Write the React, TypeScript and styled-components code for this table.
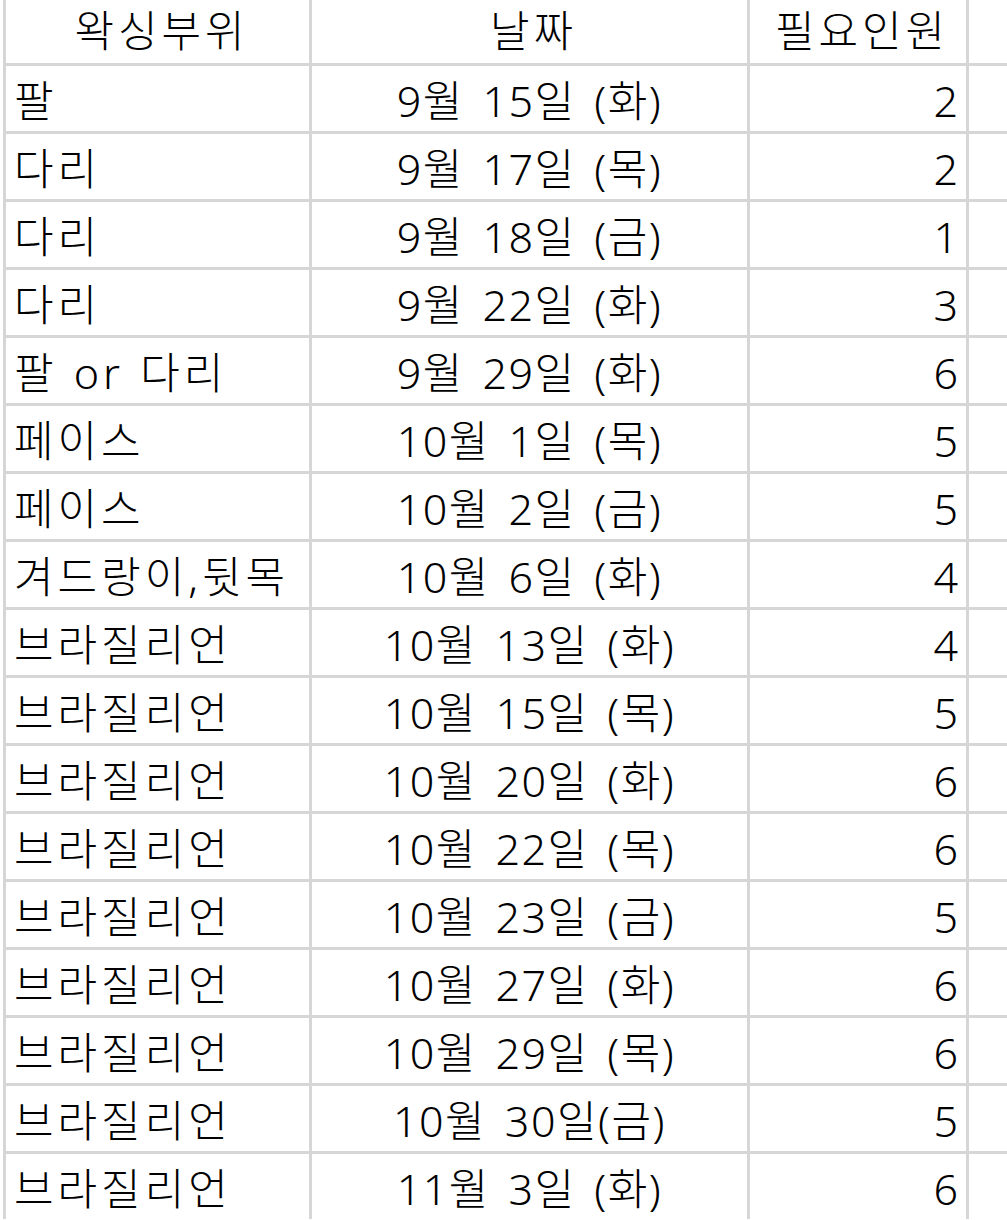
import React from 'react';
import styled, { createGlobalStyle } from 'styled-components';

const GlobalStyle = createGlobalStyle`
  html, body {
    margin: 0;
    padding: 0;
    background: #ffffff;
    overflow: hidden;
  }
`;

const Sheet = styled.div`
  display: grid;
  grid-template-columns: 303px 435px 216px 1fr;
  grid-template-rows: 63px;
  grid-auto-rows: 65px;
  gap: 3px;
  margin-left: 3px;
  border-left: 3px solid #d6d6d6;
  background: #d6d6d6;
  width: 1001px;
  font-family: "Noto Sans", "Noto Sans CJK KR", sans-serif;
  font-size: 43px;
  font-weight: 300;
  color: #000000;
`;

const Cell = styled.div<{ $align?: 'left' | 'center' | 'right'; $header?: boolean; $spacing?: number; $words?: number }>`
  background: #ffffff;
  display: flex;
  align-items: center;
  justify-content: ${({ $align }) =>
    $align === 'right' ? 'flex-end' : $align === 'center' ? 'center' : 'flex-start'};
  padding: ${({ $header }) => ($header ? '0 8px 2px' : '4px 8px 0')};
  letter-spacing: ${({ $spacing = 0 }) => $spacing}px;
  word-spacing: ${({ $words = 0 }) => $words}px;
  white-space: pre;
  line-height: 1;
  overflow: hidden;
`;

const HeaderCell = styled(Cell)`
  padding-left: 16px;
`;

const rows: [string, string, number][] = [
  ['팔', '9월 15일 (화)', 2],
  ['다리', '9월 17일 (목)', 2],
  ['다리', '9월 18일 (금)', 1],
  ['다리', '9월 22일 (화)', 3],
  ['팔 or 다리', '9월 29일 (화)', 6],
  ['페이스', '10월 1일 (목)', 5],
  ['페이스', '10월 2일 (금)', 5],
  ['겨드랑이,뒷목', '10월 6일 (화)', 4],
  ['브라질리언', '10월 13일 (화)', 4],
  ['브라질리언', '10월 15일 (목)', 5],
  ['브라질리언', '10월 20일 (화)', 6],
  ['브라질리언', '10월 22일 (목)', 6],
  ['브라질리언', '10월 23일 (금)', 5],
  ['브라질리언', '10월 27일 (화)', 6],
  ['브라질리언', '10월 29일 (목)', 6],
  ['브라질리언', '10월 30일(금)', 5],
  ['브라질리언', '11월 3일 (화)', 6],
];

const App = () => {
  return (
    <>
      <GlobalStyle />
      <Sheet>
        <HeaderCell $align="center" $header $spacing={4}>왁싱부위</HeaderCell>
        <HeaderCell $align="center" $header $spacing={4}>날짜</HeaderCell>
        <HeaderCell $align="center" $header $spacing={4}>필요인원</HeaderCell>
        <Cell $header />
        {rows.map(([part, date, count], i) => (
          <React.Fragment key={i}>
            <Cell $spacing={4} $words={1}>{part}</Cell>
            <Cell $align="center" $spacing={1.5} $words={6}>{date}</Cell>
            <Cell $align="right">{count}</Cell>
            <Cell />
          </React.Fragment>
        ))}
      </Sheet>
    </>
  );
};

export default App;
